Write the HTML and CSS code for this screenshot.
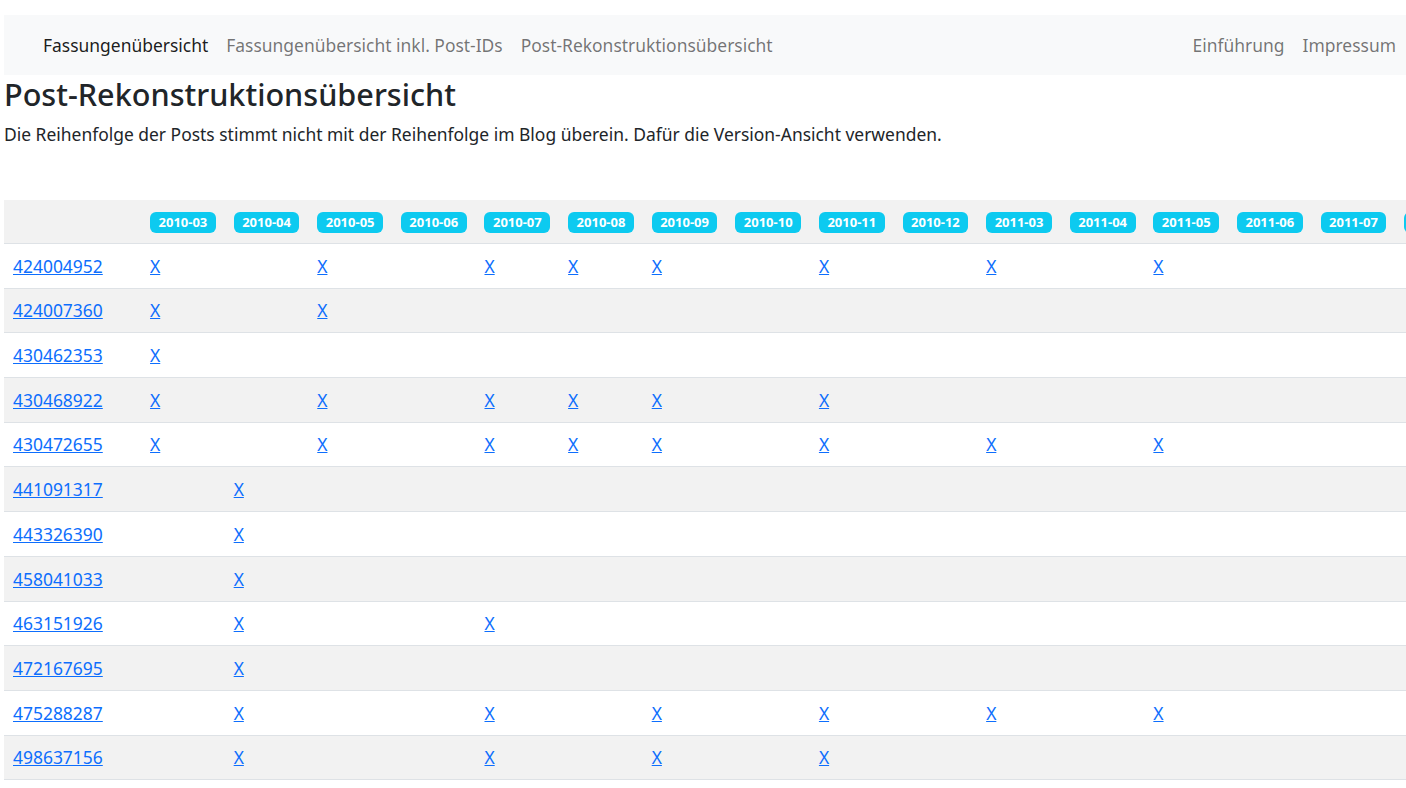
FILE: index.html
```html
<!DOCTYPE html>
<html lang="de">
<head>
    <meta charset="UTF-8">
    <meta name="viewport" content="width=device-width, initial-scale=1.0">
    <title>Post-Rekonstruktionsübersicht</title>
    <link rel="stylesheet" href="styles.css">
</head>
<body>
    <nav class="navbar">
        <ul class="nav-list">
            <li><a class="nav-link active" href="#">Fassungenübersicht</a></li>
            <li><a class="nav-link" href="#">Fassungenübersicht inkl. Post-IDs</a></li>
            <li><a class="nav-link" href="#">Post-Rekonstruktionsübersicht</a></li>
        </ul>
        <ul class="nav-list">
            <li><a class="nav-link" href="#">Einführung</a></li>
            <li><a class="nav-link" href="#">Impressum</a></li>
        </ul>
    </nav>

    <h3 class="page-title">Post-Rekonstruktionsübersicht</h3>
    <p class="lead-text">Die Reihenfolge der Posts stimmt nicht mit der Reihenfolge im Blog überein. Dafür die Version-Ansicht verwenden.</p>

    <div class="table-wrap">
        <table class="overview">
            <thead>
                <tr>
                    <th class="id-col"></th>
                    <th><span class="badge">2010-03</span></th>
                    <th><span class="badge">2010-04</span></th>
                    <th><span class="badge">2010-05</span></th>
                    <th><span class="badge">2010-06</span></th>
                    <th><span class="badge">2010-07</span></th>
                    <th><span class="badge">2010-08</span></th>
                    <th><span class="badge">2010-09</span></th>
                    <th><span class="badge">2010-10</span></th>
                    <th><span class="badge">2010-11</span></th>
                    <th><span class="badge">2010-12</span></th>
                    <th><span class="badge">2011-03</span></th>
                    <th><span class="badge">2011-04</span></th>
                    <th><span class="badge">2011-05</span></th>
                    <th><span class="badge">2011-06</span></th>
                    <th><span class="badge">2011-07</span></th>
                    <th><span class="badge">2011-08</span></th>
                </tr>
            </thead>
            <tbody>
                <tr><td class="id-col"><a href="#">424004952</a></td><td><a href="#">X</a></td><td></td><td><a href="#">X</a></td><td></td><td><a href="#">X</a></td><td><a href="#">X</a></td><td><a href="#">X</a></td><td></td><td><a href="#">X</a></td><td></td><td><a href="#">X</a></td><td></td><td><a href="#">X</a></td><td></td><td></td><td></td></tr>
                <tr><td class="id-col"><a href="#">424007360</a></td><td><a href="#">X</a></td><td></td><td><a href="#">X</a></td><td></td><td></td><td></td><td></td><td></td><td></td><td></td><td></td><td></td><td></td><td></td><td></td><td></td></tr>
                <tr><td class="id-col"><a href="#">430462353</a></td><td><a href="#">X</a></td><td></td><td></td><td></td><td></td><td></td><td></td><td></td><td></td><td></td><td></td><td></td><td></td><td></td><td></td><td></td></tr>
                <tr><td class="id-col"><a href="#">430468922</a></td><td><a href="#">X</a></td><td></td><td><a href="#">X</a></td><td></td><td><a href="#">X</a></td><td><a href="#">X</a></td><td><a href="#">X</a></td><td></td><td><a href="#">X</a></td><td></td><td></td><td></td><td></td><td></td><td></td><td></td></tr>
                <tr><td class="id-col"><a href="#">430472655</a></td><td><a href="#">X</a></td><td></td><td><a href="#">X</a></td><td></td><td><a href="#">X</a></td><td><a href="#">X</a></td><td><a href="#">X</a></td><td></td><td><a href="#">X</a></td><td></td><td><a href="#">X</a></td><td></td><td><a href="#">X</a></td><td></td><td></td><td></td></tr>
                <tr><td class="id-col"><a href="#">441091317</a></td><td></td><td><a href="#">X</a></td><td></td><td></td><td></td><td></td><td></td><td></td><td></td><td></td><td></td><td></td><td></td><td></td><td></td><td></td></tr>
                <tr><td class="id-col"><a href="#">443326390</a></td><td></td><td><a href="#">X</a></td><td></td><td></td><td></td><td></td><td></td><td></td><td></td><td></td><td></td><td></td><td></td><td></td><td></td><td></td></tr>
                <tr><td class="id-col"><a href="#">458041033</a></td><td></td><td><a href="#">X</a></td><td></td><td></td><td></td><td></td><td></td><td></td><td></td><td></td><td></td><td></td><td></td><td></td><td></td><td></td></tr>
                <tr><td class="id-col"><a href="#">463151926</a></td><td></td><td><a href="#">X</a></td><td></td><td></td><td><a href="#">X</a></td><td></td><td></td><td></td><td></td><td></td><td></td><td></td><td></td><td></td><td></td><td></td></tr>
                <tr><td class="id-col"><a href="#">472167695</a></td><td></td><td><a href="#">X</a></td><td></td><td></td><td></td><td></td><td></td><td></td><td></td><td></td><td></td><td></td><td></td><td></td><td></td><td></td></tr>
                <tr><td class="id-col"><a href="#">475288287</a></td><td></td><td><a href="#">X</a></td><td></td><td></td><td><a href="#">X</a></td><td></td><td><a href="#">X</a></td><td></td><td><a href="#">X</a></td><td></td><td><a href="#">X</a></td><td></td><td><a href="#">X</a></td><td></td><td></td><td></td></tr>
                <tr><td class="id-col"><a href="#">498637156</a></td><td></td><td><a href="#">X</a></td><td></td><td></td><td><a href="#">X</a></td><td></td><td><a href="#">X</a></td><td></td><td><a href="#">X</a></td><td></td><td></td><td></td><td></td><td></td><td></td><td></td></tr>
            </tbody>
        </table>
    </div>
</body>
</html>
```

FILE: styles.css
```css
:root {
    --link-color: #0d6efd;
    --badge-color: #0dcaf0;
    --nav-bg: #f8f9fa;
    --stripe-bg: #f2f2f2;
    --border-color: #dee2e6;
    --text-color: #212529;
}

html {
    overflow-x: hidden;
}

body {
    font-family: 'Noto Sans', 'Open Sans', sans-serif;
    font-size: 17.45px;
    line-height: 1.5;
    color: var(--text-color);
    margin: 0;
    padding: 15px 0 0 4px;
}

.navbar {
    display: flex;
    justify-content: space-between;
    align-items: center;
    height: 60px;
    background: var(--nav-bg);
    padding: 0 2px 0 31px;
}

.nav-list {
    display: flex;
    list-style: none;
    margin: 0;
    padding: 0;
    gap: 2px;
}

.nav-link {
    display: block;
    padding: 0 8px;
    color: rgba(0, 0, 0, 0.55);
    text-decoration: none;
}

.nav-link.active {
    color: rgba(0, 0, 0, 0.9);
}

.page-title {
    font-size: 30.6px;
    font-weight: 500;
    line-height: 1.2;
    margin: 1px 0 8px;
}

.lead-text {
    margin: 0 0 53px;
}

.overview {
    width: 1476px;
    table-layout: fixed;
    border-collapse: collapse;
}

.overview th,
.overview td {
    width: 67.6px;
    padding: 8.78px 8px;
    text-align: left;
    vertical-align: middle;
    border-bottom: 1px solid var(--border-color);
}

.overview th {
    padding: 12.5px 8px 9.5px;
    line-height: 21px;
}

.overview .id-col {
    width: 121px;
    padding-left: 9px;
}

.overview thead tr {
    background: var(--stripe-bg);
}

.overview tbody tr:nth-child(even) {
    background: var(--stripe-bg);
}

.overview a {
    color: var(--link-color);
}

.badge {
    display: inline-block;
    vertical-align: top;
    background: var(--badge-color);
    color: #fff;
    font-size: 13px;
    font-weight: 700;
    line-height: 13px;
    padding: 4px 8.5px;
    border-radius: 6px;
    white-space: nowrap;
}
```
